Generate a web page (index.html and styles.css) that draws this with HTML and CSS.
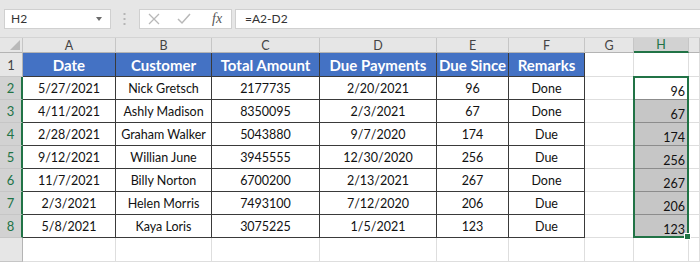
FILE: index.html
```html
<!DOCTYPE html>
<html lang="en">
<head>
  <meta charset="UTF-8" />
  <title>Due Since</title>
  <link rel="stylesheet" href="styles.css">
</head>
<body>
  <div class="toolbar">
    <div class="namebox">
      <span>H2</span>
      <svg class="caret" width="6" height="4" viewBox="0 0 6 4"><path d="M0 0h6L3 4z" fill="#6b6b6b"/></svg>
    </div>
    <svg class="grip" width="3" height="12" viewBox="0 0 3 12">
      <rect x="0.5" y="0" width="2" height="2" fill="#b5b5b5"/>
      <rect x="0.5" y="5" width="2" height="2" fill="#b5b5b5"/>
      <rect x="0.5" y="10" width="2" height="2" fill="#b5b5b5"/>
    </svg>
    <div class="fxbox">
      <svg width="12" height="12" viewBox="0 0 12 12"><path d="M1 1l10 10M11 1L1 11" stroke="#b8b8b8" stroke-width="1.3" fill="none"/></svg>
      <svg width="14" height="12" viewBox="0 0 14 12"><path d="M1 6l4 4 8-9" stroke="#b8b8b8" stroke-width="1.5" fill="none"/></svg>
      <span class="fx">fx</span>
    </div>
    <div class="formula">=A2-D2</div>
  </div>

  <div class="sheet">
    <!-- column headers -->
    <div class="ch corner"><span class="tri"></span></div>
    <div class="ch">A</div>
    <div class="ch">B</div>
    <div class="ch">C</div>
    <div class="ch">D</div>
    <div class="ch">E</div>
    <div class="ch">F</div>
    <div class="ch">G</div>
    <div class="ch active">H</div>
    <div class="ch"></div>

    <!-- row 1 -->
    <div class="rh">1</div>
    <div class="th">Date</div>
    <div class="th">Customer</div>
    <div class="th">Total Amount</div>
    <div class="th">Due Payments</div>
    <div class="th">Due Since</div>
    <div class="th">Remarks</div>
    <div class="c"></div>
    <div class="c"></div>
    <div class="c"></div>

    <!-- row 2 -->
    <div class="rh sel">2</div>
    <div class="td">5/27/2021</div>
    <div class="td">Nick Gretsch</div>
    <div class="td">2177735</div>
    <div class="td">2/20/2021</div>
    <div class="td">96</div>
    <div class="td">Done</div>
    <div class="c"></div>
    <div class="h first">96
      <!-- selected range H2:H8 -->
      <div class="selection"><span class="handle"></span></div>
    </div>
    <div class="c"></div>

    <!-- row 3 -->
    <div class="rh sel">3</div>
    <div class="td">4/11/2021</div>
    <div class="td">Ashly Madison</div>
    <div class="td">8350095</div>
    <div class="td">2/3/2021</div>
    <div class="td">67</div>
    <div class="td">Done</div>
    <div class="c"></div>
    <div class="h">67</div>
    <div class="c"></div>

    <!-- row 4 -->
    <div class="rh sel">4</div>
    <div class="td">2/28/2021</div>
    <div class="td">Graham Walker</div>
    <div class="td">5043880</div>
    <div class="td">9/7/2020</div>
    <div class="td">174</div>
    <div class="td">Due</div>
    <div class="c"></div>
    <div class="h">174</div>
    <div class="c"></div>

    <!-- row 5 -->
    <div class="rh sel">5</div>
    <div class="td">9/12/2021</div>
    <div class="td">Willian June</div>
    <div class="td">3945555</div>
    <div class="td">12/30/2020</div>
    <div class="td">256</div>
    <div class="td">Due</div>
    <div class="c"></div>
    <div class="h">256</div>
    <div class="c"></div>

    <!-- row 6 -->
    <div class="rh sel">6</div>
    <div class="td">11/7/2021</div>
    <div class="td">Billy Norton</div>
    <div class="td">6700200</div>
    <div class="td">2/13/2021</div>
    <div class="td">267</div>
    <div class="td">Done</div>
    <div class="c"></div>
    <div class="h">267</div>
    <div class="c"></div>

    <!-- row 7 -->
    <div class="rh sel">7</div>
    <div class="td">2/3/2021</div>
    <div class="td">Helen Morris</div>
    <div class="td">7493100</div>
    <div class="td">7/12/2020</div>
    <div class="td">206</div>
    <div class="td">Due</div>
    <div class="c"></div>
    <div class="h">206</div>
    <div class="c"></div>

    <!-- row 8 -->
    <div class="rh sel">8</div>
    <div class="td">5/8/2021</div>
    <div class="td">Kaya Loris</div>
    <div class="td">3075225</div>
    <div class="td">1/5/2021</div>
    <div class="td">123</div>
    <div class="td">Due</div>
    <div class="c"></div>
    <div class="h">123</div>
    <div class="c"></div>

    <!-- row 9 (cut off by the window) -->
    <div class="rh"></div>
    <div class="c"></div>
    <div class="c"></div>
    <div class="c"></div>
    <div class="c"></div>
    <div class="c"></div>
    <div class="c"></div>
    <div class="c"></div>
    <div class="c"></div>
    <div class="c"></div>
  </div>
</body>
</html>
```

FILE: styles.css
```css
body {
  margin: 0;
  width: 700px;
  height: 262px;
  overflow: hidden;
  background: #fff;
  font-family: Lato, "Liberation Sans", sans-serif;
  color: #222;
}
.toolbar {
  height: 38px;
  box-sizing: border-box;
  background: #e6e6e6;
  border-bottom: 1px solid #d4d4d4;
  display: flex;
  align-items: center;
  padding-left: 4px;
}
.namebox {
  width: 107px;
  height: 20px;
  box-sizing: border-box;
  background: #fff;
  border: 1px solid #d0d0d0;
  display: flex;
  align-items: center;
  justify-content: space-between;
  padding: 0 8px 0 6px;
  font-size: 12px;
  color: #333;
}
.grip {
  margin: 0 13px 0 12px;
}
.fxbox {
  width: 93px;
  height: 20px;
  box-sizing: border-box;
  background: #fff;
  border: 1px solid #d0d0d0;
  display: flex;
  align-items: center;
  gap: 17px;
  padding-left: 8px;
}
.fx {
  font-family: "Liberation Serif", serif;
  font-style: italic;
  font-size: 14px;
  color: #555;
  margin-left: 4px;
}
.formula {
  flex: 1;
  height: 20px;
  box-sizing: border-box;
  margin-left: 3px;
  background: #fff;
  border: 1px solid #d0d0d0;
  border-right: none;
  display: flex;
  align-items: center;
  padding-left: 9px;
  font-size: 12px;
  color: #333;
}
.sheet {
  display: grid;
  grid-template-columns: 23px 93px 96px 108px 117px 72px 76px 49px 55px 1fr;
  grid-template-rows: 15px 24px repeat(7, 23px) 24px;
  font-size: 12.5px;
}
.sheet > div {
  box-sizing: border-box;
  border-right: 1px solid #dedede;
  border-bottom: 1px solid #dedede;
  display: flex;
  align-items: center;
  justify-content: center;
  white-space: nowrap;
}
.sheet > .ch {
  background: #e6e6e6;
  border-right-color: #c6c6c6;
  border-bottom-color: #b4b4b4;
  color: #444;
  font-size: 12.5px;
}
.sheet > .ch.active {
  background: #d2d2d2;
  color: #217346;
  border-bottom: 2px solid #217346;
}
.corner {
  position: relative;
}
.tri {
  position: absolute;
  right: 2px;
  bottom: 2px;
  border-left: 10px solid transparent;
  border-bottom: 10px solid #b9b9b9;
}
.sheet > .rh {
  background: #e6e6e6;
  border-right-color: #b4b4b4;
  border-bottom-color: #c6c6c6;
  color: #444;
  font-size: 13px;
}
.sheet > .rh.sel {
  background: #d2d2d2;
  color: #217346;
  border-right: 2px solid #217346;
}
.sheet > .th {
  background: #4472c4;
  color: #fff;
  font-weight: bold;
  font-size: 15px;
  border-right-color: #3a3a3a;
  border-bottom-color: #3a3a3a;
}
.sheet > .td {
  color: #111;
  border-right-color: #3a3a3a;
  border-bottom-color: #3a3a3a;
}
.sheet > .h {
  background: #c6c6c6;
  border-bottom-color: #8c8c8c;
  align-items: flex-end;
  justify-content: flex-end;
  padding: 0 3px 0 0;
  color: #111;
}
.sheet > .h.first {
  background: #fff;
  position: relative;
}
.selection {
  position: absolute;
  left: -1px;
  top: -1px;
  width: 56px;
  height: 162px;
  box-sizing: border-box;
  border: 2px solid #217346;
  pointer-events: none;
}
.handle {
  position: absolute;
  right: -4px;
  bottom: -4px;
  width: 5px;
  height: 5px;
  background: #217346;
  border: 1px solid #fff;
}
```
